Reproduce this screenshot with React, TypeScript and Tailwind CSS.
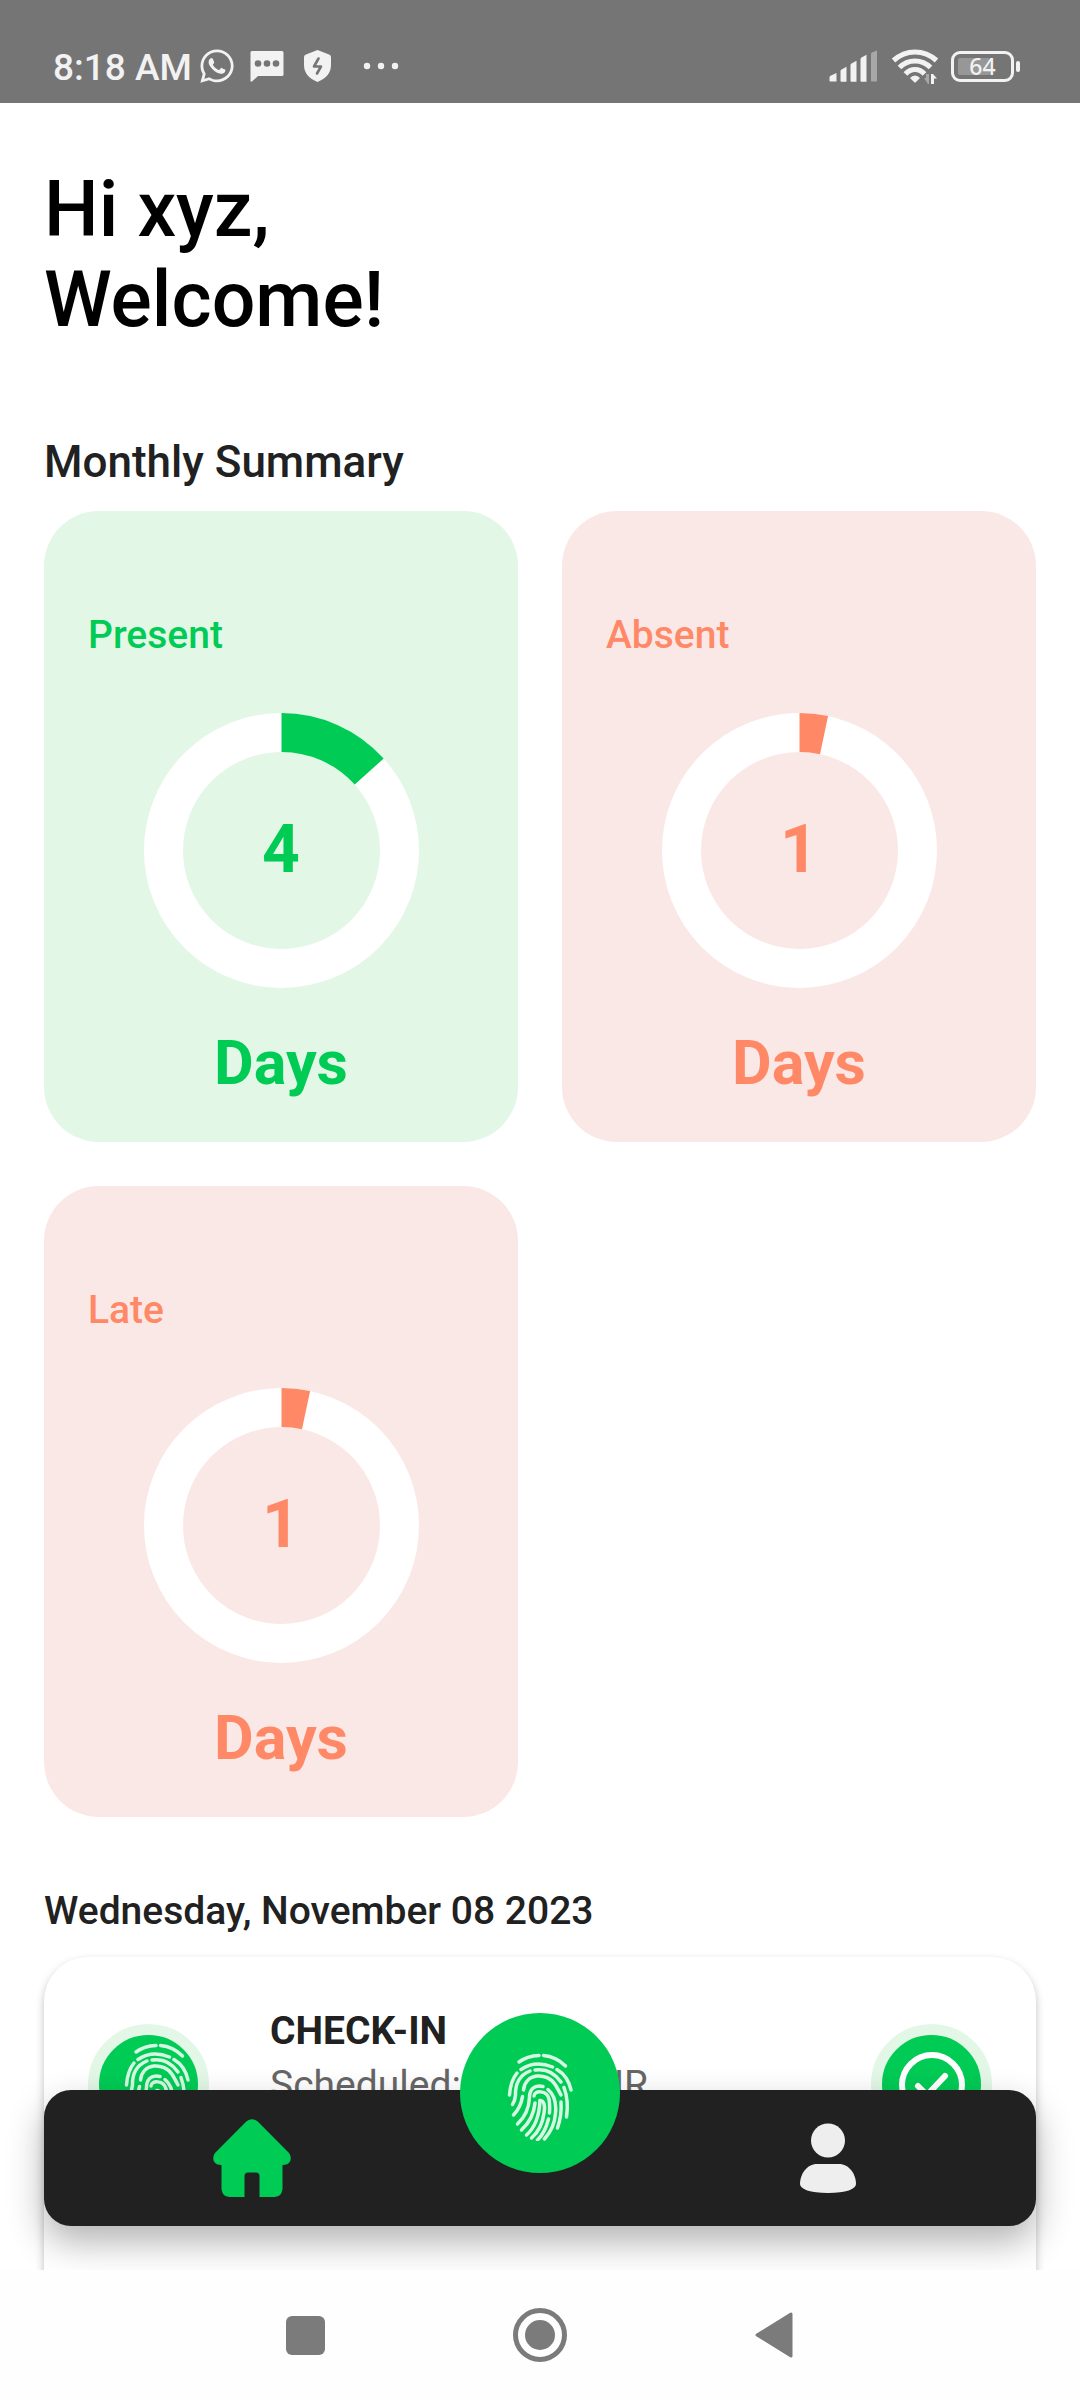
import { FaWhatsapp } from 'react-icons/fa'

type Tone = 'green' | 'orange'

const summary: { label: string; days: number; tone: Tone }[] = [
    { label: 'Present', days: 4, tone: 'green' },
    { label: 'Absent', days: 1, tone: 'orange' },
    { label: 'Late', days: 1, tone: 'orange' },
]

const DAYS_IN_MONTH = 30

const StatusBar = () => (
    <header className="flex h-[103px] shrink-0 items-end justify-between bg-[#757575] pr-[60px] pl-[53px] text-[#f2f2f2]">
        <div className="flex h-[74px] items-center">
            <span className="pt-1 text-[37px] leading-[44px] font-medium">
                8:18 AM
            </span>
            <FaWhatsapp className="ml-1.5 size-[38px]" />
            <svg viewBox="0 0 34 32" className="ml-3.5 h-8 w-[34px]">
                <path
                    d="M2 1h30a1.500 1.500 0 0 1 1.500 1.500v22a1.500 1.500 0 0 1-1.500 1.500H8l-6 5.500H.5V2.500A1.500 1.500 0 0 1 2 1z"
                    fill="currentColor"
                />
                <circle cx="8" cy="13.500" r="3.300" fill="#757575" />
                <circle cx="17" cy="13.500" r="3.300" fill="#757575" />
                <circle cx="26" cy="13.500" r="3.300" fill="#757575" />
            </svg>
            <svg viewBox="0 0 27 32" className="ml-5 h-8 w-[27px]">
                <path
                    d="M13.500 0l11.500 4.500q2 .7 2 2.500v8c0 8-5 13.500-13.500 17C5 28.500 0 23 0 15V7q0-1.800 2-2.500z"
                    fill="currentColor"
                />
                <path
                    d="M14.500 8.500L10 16.500h7l-4 7"
                    fill="none"
                    stroke="#757575"
                    strokeWidth="2.600"
                    strokeLinecap="round"
                    strokeLinejoin="round"
                />
            </svg>
            <svg viewBox="0 0 36 8" className="ml-8 h-2 w-9">
                <circle cx="4" cy="4" r="3.200" fill="currentColor" />
                <circle cx="18" cy="4" r="3.200" fill="currentColor" />
                <circle cx="32" cy="4" r="3.200" fill="currentColor" />
            </svg>
        </div>
        <div className="flex h-[74px] items-center">
            {/* signal */}
            <svg viewBox="0 0 50 32" className="h-8 w-[50px]" fill="currentColor">
                <path d="M.5 31v-3.500q0-1.500 1.500-2L7.500 23v8.500H1z" />
                <path d="M11.500 31V21q0-1 1-1.600l5-2.700v15h-5.500z" />
                <path d="M21.500 31V15q0-1 1-1.600l5-2.700v21h-5.500z" />
                <path d="M31.500 31V9q0-1 1-1.600l5-2.700v27h-5.500z" />
                <path d="M42 31V4q0-1 1-1.600l5-2v31h-5.500z" opacity=".4" />
            </svg>
            {/* wifi */}
            <svg viewBox="0 0 48 36" className="ml-3 h-9 w-12">
                <g
                    fill="none"
                    stroke="currentColor"
                    strokeWidth="5.200"
                >
                    <path d="M2.500 12.500Q12 4 24 4t21.500 8.500" />
                    <path d="M8.500 19.500Q15 13 24 13t15.500 6.500" />
                    <path d="M14.500 26Q18.500 21.500 24 21.500T33.500 26" />
                </g>
                <path
                    d="M24 27.500q3 0 5 2.500l-4 4q-1 1-2 0l-4-4q2-2.500 5-2.500z"
                    fill="currentColor"
                />
                <path d="M33 30h2v-4h3v10h-1z" fill="currentColor" opacity=".4" />
                <path d="M40 26h2l4 4.500h-3V36h-3z" fill="currentColor" />
            </svg>
            <div className="ml-3 flex items-center gap-0.5">
                <div className="relative flex h-[31px] w-[63px] items-center justify-center rounded-[9px] border-3 border-current">
                    <span className="absolute inset-y-1 left-1 w-8 rounded-xs bg-white/25" />
                    <span className="relative font-[Noto_Sans] text-[23px] leading-6 font-medium">
                        64
                    </span>
                </div>
                <span className="h-[11px] w-1 rounded-xs bg-current" />
            </div>
        </div>
    </header>
)

const Fingerprint = () => (
    <svg
        viewBox="0 0 66 88"
        className="h-[88px] w-[66px]"
        fill="none"
        stroke="#d5f8e2"
        strokeWidth="3.500"
        strokeLinecap="round"
        strokeLinejoin="round"
    >
        <path d="M12 9Q20 3 32 2.500M36.500 2.500Q49 3.500 58.500 13" />
        <path d="M14 16.500Q28 7 45.500 14M50 16.500Q61 23 64 37" />
        <path d="M10 20Q3.500 28 2.500 42" />
        <path d="M23 18Q8 24 8.500 42Q8 48 5.500 51.500" />
        <path d="M28 17Q44 14.500 54 29" />
        <path d="M16.500 37C18 20 40 18.500 48.500 32Q52 38 54 42" />
        <path d="M15.500 43.500Q14 54 6.500 62" />
        <path d="M36 33.500C27 31 22.500 37 22.500 44C22 58 16 66 10.500 71" />
        <path d="M27 43C27 37 40 37 42 46Q43 51 42.500 60" />
        <path d="M41 36.500Q50 44 48.500 60Q47.500 75 37.500 86" />
        <path d="M28 50Q26.500 66 14.500 77" />
        <path d="M19.500 82Q32 71 33 47.500" />
        <path d="M33 47.500Q39 48 37 60Q35 76 24.500 85" />
        <path d="M30.500 87Q38 80 41.500 66" />
        <path d="M57 34.500Q62 48 59.500 64" />
        <path d="M54 49Q55 62 50.500 75" />
    </svg>
)

const SummaryCard = ({
    label,
    days,
    tone,
}: {
    label: string
    days: number
    tone: Tone
}) => {
    const angle = (days / DAYS_IN_MONTH) * 2 * Math.PI
    const x = 137.5 + 118 * Math.sin(angle)
    const y = 137.5 - 118 * Math.cos(angle)

    return (
        <article
            className={
                tone === 'green'
                    ? 'flex flex-col items-center rounded-[55px] bg-[#e2f7e6] px-11 pt-[101px] pb-11 text-[#00cb55]'
                    : 'flex flex-col items-center rounded-[55px] bg-[#fae8e6] px-11 pt-[101px] pb-11 text-[#ff8966]'
            }
        >
            <h3 className="self-start text-[39px] leading-[46px] font-medium">
                {label}
            </h3>
            <div className="relative mt-[55px] flex size-[275px] items-center justify-center">
                <svg
                    viewBox="0 0 275 275"
                    className="absolute inset-0 size-full"
                    fill="none"
                    strokeWidth="39"
                >
                    <circle cx="137.500" cy="137.500" r="118" stroke="#fff" />
                    <path
                        d={`M137.5 19.5A118 118 0 0 1 ${x} ${y}`}
                        stroke="currentColor"
                    />
                </svg>
                <span className="relative pb-0.5 text-[66px] leading-[78px] font-bold">
                    {days}
                </span>
            </div>
            <span className="mt-10 text-[61px] leading-[70px] font-bold">
                Days
            </span>
        </article>
    )
}

const CheckInRow = () => (
    <div className="flex items-start px-11 pt-[45px]">
        <div className="mt-[22px] flex size-[121px] items-center justify-center rounded-full border-11 border-[#e2f7e6] bg-[#00cb55] pt-1 pl-4">
            <Fingerprint />
        </div>
        <div className="ml-[61px] flex-1 pt-0.5 text-[39px]">
            <h3 className="leading-[54px] font-bold text-[#212121]">CHECK-IN</h3>
            <p className="flex w-[378px] justify-between leading-[54px] text-[#666]">
                <span>Scheduled:</span>
                <span>9.00 HR</span>
            </p>
        </div>
        <div className="mt-[22px] flex size-[121px] items-center justify-center rounded-full border-11 border-[#e2f7e6] bg-[#00cb55]">
            <svg
                viewBox="0 0 66 66"
                className="size-[66px]"
                fill="none"
                stroke="#fff"
                strokeWidth="6"
            >
                <circle cx="33" cy="33" r="30" />
                <path
                    d="M19 34l9 9 18-19"
                    strokeLinecap="round"
                    strokeLinejoin="round"
                />
            </svg>
        </div>
    </div>
)

const BottomNav = () => (
    <nav className="absolute inset-x-11 bottom-11 grid h-[136px] grid-cols-[1fr_160px_1fr] items-center rounded-[27px] bg-[#212121] shadow-[0_16px_36px_rgba(0,0,0,0.3)]">
        <a
            href="#home"
            aria-label="Home"
            className="flex justify-center text-[#00cb55]"
        >
            <svg viewBox="0 0 78 78" className="size-[78px]" fill="currentColor">
                <path d="M33.500 2.300Q39-2 44.500 2.300L76 34Q79 38 77 42.500 75 46 69.500 46V70Q69 77.500 61.500 78H46.500V57Q46.500 53.500 43 53.500H35Q31.500 53.500 31.500 57V78H16.500Q9 77.500 8.500 70V46Q3 46 1 42.500-1 38 2 34z" />
            </svg>
        </a>
        <button
            type="button"
            aria-label="Check in"
            className="-mt-[130px] flex size-40 items-center justify-center self-center rounded-full bg-[#00cb55] pt-2"
        >
            <Fingerprint />
        </button>
        <a
            href="#profile"
            aria-label="Profile"
            className="flex justify-center text-[#eee]"
        >
            <svg viewBox="0 0 56 70" className="h-[70px] w-14" fill="currentColor">
                <circle cx="28" cy="17.500" r="17" />
                <path d="M17 41H39C49 41 56 51 56 61 56 66 46 70 28 70S0 66 0 61C0 51 7 41 17 41z" />
            </svg>
        </a>
    </nav>
)

const SystemBar = () => (
    <footer className="flex h-[130px] shrink-0 items-center justify-center gap-[188px] bg-[#fefefe] pr-0.5 text-[#7b7b7b]">
        <button type="button" aria-label="Recent apps">
            <span className="block size-[39px] rounded-md bg-current" />
        </button>
        <button
            type="button"
            aria-label="Home screen"
            className="flex size-[54px] items-center justify-center rounded-full border-5 border-current"
        >
            <span className="size-[30px] rounded-full bg-current" />
        </button>
        <button type="button" aria-label="Back">
            <svg viewBox="0 0 38 46" className="h-[46px] w-[38px]">
                <path
                    d="M36 2v42L2 23z"
                    fill="currentColor"
                    stroke="currentColor"
                    strokeWidth="3"
                    strokeLinejoin="round"
                />
            </svg>
        </button>
    </footer>
)

const App = () => {
    return (
        <div className="flex h-screen flex-col bg-white font-[Roboto,sans-serif]">
            <StatusBar />
            <div className="relative min-h-0 flex-1 overflow-hidden">
                <main className="h-full overflow-y-auto px-11 pt-[62px] [scrollbar-width:none]">
                    <h1 className="text-[77px] leading-[90px] font-medium text-black">
                        Hi xyz,
                        <br />
                        Welcome!
                    </h1>

                    <h2 className="mt-[91px] text-[44px] leading-[52px] font-medium text-[#212121]">
                        Monthly Summary
                    </h2>
                    <section className="mt-[23px] grid grid-cols-2 gap-11">
                        {summary.map((item) => (
                            <SummaryCard key={item.label} {...item} />
                        ))}
                    </section>

                    <h2 className="mt-[71px] text-[39px] leading-[46px] font-medium text-[#212121]">
                        Wednesday, November 08 2023
                    </h2>
                    <section className="mt-[23px] h-[530px] rounded-[44px] bg-white shadow-[0_4px_8px_rgba(0,0,0,0.25)]">
                        <CheckInRow />
                    </section>
                </main>
                <BottomNav />
            </div>
            <SystemBar />
        </div>
    )
}

export default App
